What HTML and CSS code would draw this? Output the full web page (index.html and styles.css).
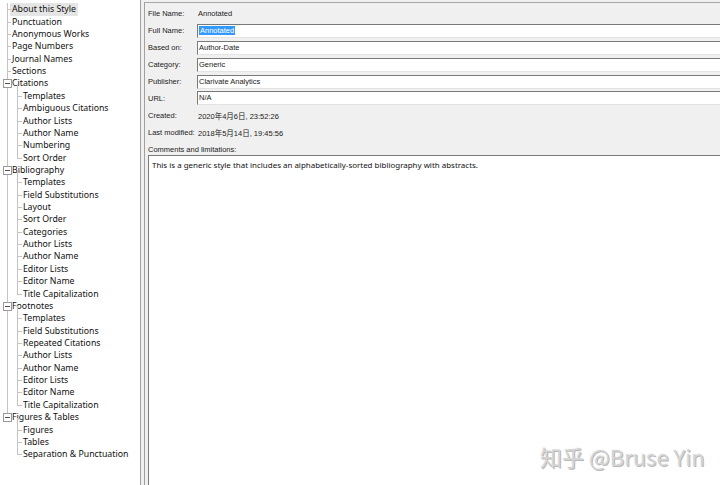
FILE: index.html
```html
<!DOCTYPE html>
<html lang="en">
<head>
    <meta charset="UTF-8">
    <meta name="viewport" content="width=device-width, initial-scale=1.0">
    <title>Style Manager - Annotated</title>
    <link rel="stylesheet" href="styles.css">
</head>
<body>
    <div class="window">
        <!-- Style sections tree -->
        <aside class="tree">
            <ul class="root">
                <li><span class="node selected">About this Style</span></li>
                <li><span class="node">Punctuation</span></li>
                <li><span class="node">Anonymous Works</span></li>
                <li><span class="node">Page Numbers</span></li>
                <li><span class="node">Journal Names</span></li>
                <li><span class="node">Sections</span></li>
                <li class="open"><span class="toggle"></span><span class="node">Citations</span>
                    <ul>
                        <li><span class="node">Templates</span></li>
                        <li><span class="node">Ambiguous Citations</span></li>
                        <li><span class="node">Author Lists</span></li>
                        <li><span class="node">Author Name</span></li>
                        <li><span class="node">Numbering</span></li>
                        <li><span class="node">Sort Order</span></li>
                    </ul>
                </li>
                <li class="open"><span class="toggle"></span><span class="node">Bibliography</span>
                    <ul>
                        <li><span class="node">Templates</span></li>
                        <li><span class="node">Field Substitutions</span></li>
                        <li><span class="node">Layout</span></li>
                        <li><span class="node">Sort Order</span></li>
                        <li><span class="node">Categories</span></li>
                        <li><span class="node">Author Lists</span></li>
                        <li><span class="node">Author Name</span></li>
                        <li><span class="node">Editor Lists</span></li>
                        <li><span class="node">Editor Name</span></li>
                        <li><span class="node">Title Capitalization</span></li>
                    </ul>
                </li>
                <li class="open"><span class="toggle"></span><span class="node">Footnotes</span>
                    <ul>
                        <li><span class="node">Templates</span></li>
                        <li><span class="node">Field Substitutions</span></li>
                        <li><span class="node">Repeated Citations</span></li>
                        <li><span class="node">Author Lists</span></li>
                        <li><span class="node">Author Name</span></li>
                        <li><span class="node">Editor Lists</span></li>
                        <li><span class="node">Editor Name</span></li>
                        <li><span class="node">Title Capitalization</span></li>
                    </ul>
                </li>
                <li class="open"><span class="toggle"></span><span class="node">Figures &amp; Tables</span>
                    <ul>
                        <li><span class="node">Figures</span></li>
                        <li><span class="node">Tables</span></li>
                        <li><span class="node">Separation &amp; Punctuation</span></li>
                    </ul>
                </li>
            </ul>
        </aside>

        <div class="splitter"></div>

        <!-- About this Style properties -->
        <main class="props">
            <div class="fields">
                <span class="label">File Name:</span>
                <span class="value">Annotated</span>

                <span class="label">Full Name:</span>
                <div class="field"><span class="sel">Annotated</span></div>

                <span class="label">Based on:</span>
                <div class="field">Author-Date</div>

                <span class="label">Category:</span>
                <div class="field">Generic</div>

                <span class="label">Publisher:</span>
                <div class="field">Clarivate Analytics</div>

                <span class="label">URL:</span>
                <div class="field">N/A</div>

                <span class="label">Created:</span>
                <span class="value">2020年4月6日, 23:52:26</span>

                <span class="label">Last modified:</span>
                <span class="value">2018年5月14日, 19:45:56</span>
            </div>
            <div class="comments-label">Comments and limitations:</div>
            <div class="comments">This is a generic style that includes an alphabetically-sorted bibliography with abstracts.</div>
        </main>

        <div class="watermark">知乎 @Bruse Yin</div>
    </div>
</body>
</html>
```

FILE: styles.css
```css
body {
    margin: 0;
    background: #f0f0f0;
    overflow: hidden;
}

.window {
    position: relative;
    display: flex;
    width: 720px;
    height: 485px;
    overflow: hidden;
}

/* ---- tree ---- */

.tree {
    width: 140px;
    flex-shrink: 0;
    background: #fff;
    border-right: 1px solid #a0a0a0;
    padding-top: 3.3px;
    font-family: "Noto Sans", sans-serif;
    font-size: 8.75px;
    line-height: 12.36px;
    color: #111;
}

.tree ul {
    list-style: none;
    margin: 0;
    padding: 0;
}

.tree li {
    position: relative;
}

.node {
    display: inline-block;
    vertical-align: top;
    height: 12.36px;
    line-height: 12.36px;
    padding: 0 2px;
    margin-left: -2px;
    white-space: nowrap;
}

.node.selected {
    background: #e5e5e5;
}

.root > li {
    padding-left: 12px;
}

.root > li::before,
.root ul > li::before {
    content: "";
    position: absolute;
    top: 0;
    bottom: 0;
    border-left: 1px solid #c4c4c4;
}

.root > li::after,
.root ul > li::after {
    content: "";
    position: absolute;
    top: 6px;
    border-top: 1px solid #c4c4c4;
}

.root > li::before {
    left: 7px;
}

.root > li::after {
    left: 7px;
    width: 4px;
}

.root > li:last-child::before,
.root ul > li:last-child::before {
    bottom: auto;
    height: 6px;
}

.root ul > li {
    padding-left: 11px;
}

.root ul > li::before {
    left: 5px;
}

.root ul > li::after {
    left: 5px;
    width: 5px;
}

.root ul {
    position: relative;
}

.root .open > ul::before {
    content: "";
    position: absolute;
    left: 5px;
    top: -6px;
    height: 6px;
    border-left: 1px solid #c4c4c4;
}

.toggle {
    position: absolute;
    left: 3px;
    top: 2px;
    width: 7px;
    height: 7px;
    border: 1px solid #9a9a9a;
    background: #fff;
    z-index: 1;
}

.toggle::after {
    content: "";
    position: absolute;
    left: 1px;
    top: 3px;
    width: 5px;
    border-top: 1px solid #505050;
}

/* ---- splitter ---- */

.splitter {
    width: 3px;
    flex-shrink: 0;
    background: #f0f0f0;
}

/* ---- properties ---- */

.props {
    flex: 1;
    margin-top: 2px;
    border-top: 1px solid #a8a8a8;
    border-left: 1px solid #a0a0a0;
    padding: 2.5px 0 0 3px;
    font-family: "Liberation Sans", "Noto Sans CJK SC", sans-serif;
    font-size: 7.5px;
    color: #222;
    display: flex;
    flex-direction: column;
}

.fields {
    display: grid;
    grid-template-columns: 49px 1fr;
    grid-auto-rows: 16.9px;
    align-items: center;
}

.value {
    padding-left: 1px;
    white-space: nowrap;
}

.field {
    height: 12px;
    line-height: 12px;
    margin-right: -20px;
    padding-left: 1px;
    background: #fff;
    border: 1px solid;
    border-color: #7a7a7a #e3e3e3 #e3e3e3 #7a7a7a;
}

.sel {
    display: inline-block;
    background: #3399ff;
    color: #fff;
    height: 9px;
    line-height: 9px;
    padding: 0 1px;
}

.comments-label {
    margin-top: 3px;
    height: 11px;
    line-height: 11px;
}

.comments {
    flex: 1;
    margin-right: -20px;
    margin-bottom: -20px;
    background: #fff;
    border: 1px solid #7a7a7a;
    padding: 3px 3px;
    font-family: "Noto Sans", sans-serif;
    font-size: 7.95px;
    line-height: 12px;
    color: #111;
}

/* ---- watermark ---- */

.watermark {
    position: absolute;
    left: 540px;
    top: 441px;
    font-family: "Noto Sans CJK SC", "Noto Sans", sans-serif;
    font-size: 22px;
    line-height: 30px;
    color: #d4d4d4;
    text-shadow: 1px 1px 0 #b8b8b8, -1px -1px 0 #fafafa;
    white-space: nowrap;
}
```
